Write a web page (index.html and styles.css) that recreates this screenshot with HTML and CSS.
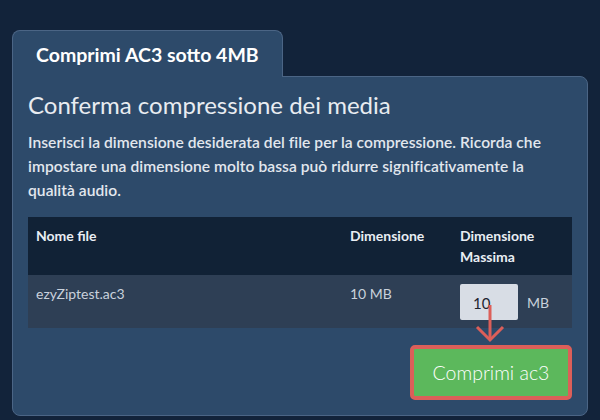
FILE: index.html
```html
<!DOCTYPE html>
<html lang="it">
<head>
<meta charset="utf-8">
<title>Comprimi AC3</title>
<link rel="stylesheet" href="styles.css">
</head>
<body>
<div class="wrap">
  <div class="tab">Comprimi AC3 sotto 4MB</div>
  <div class="panel">
    <h2 class="title">Conferma compressione dei media</h2>
    <p class="desc">Inserisci la dimensione desiderata del file per la compressione. Ricorda che impostare una dimensione molto bassa può ridurre significativamente la qualità audio.</p>
    <table class="files">
      <thead>
        <tr>
          <th class="c-name">Nome file</th>
          <th class="c-size">Dimensione</th>
          <th class="c-max">Dimensione Massima</th>
        </tr>
      </thead>
      <tbody>
        <tr>
          <td class="c-name">ezyZiptest.ac3</td>
          <td class="c-size">10 MB</td>
          <td class="c-max">
            <div class="maxwrap">
              <div class="input">10</div>
              <span class="unit">MB</span>
              <svg class="arrow" width="30" height="38" viewBox="0 0 30 38">
                <line x1="15" y1="0" x2="15" y2="35" stroke="#dc5f59" stroke-width="3"/>
                <polyline points="2,22 15,35 28,22" fill="none" stroke="#dc5f59" stroke-width="3"/>
              </svg>
            </div>
          </td>
        </tr>
      </tbody>
    </table>
    <div class="actions">
      <button class="btn">Comprimi ac3</button>
    </div>
  </div>
</div>
</body>
</html>
```

FILE: styles.css
```css
html, body {
  margin: 0;
  padding: 0;
  background: #12233a;
}
body {
  font-family: Lato, "Open Sans", sans-serif;
  color: #e6ebf1;
}
.wrap {
  padding: 30px 12px 0 12px;
}
.tab {
  position: relative;
  z-index: 1;
  width: 246px;
  height: 46px;
  padding-left: 23px;
  box-sizing: content-box;
  background: #2d4a6a;
  border: 1px solid #4b6585;
  border-bottom: none;
  border-radius: 8px 8px 0 0;
  margin-bottom: -1px;
  font-size: 19.5px;
  font-weight: 700;
  line-height: 48px;
  color: #ffffff;
}
.panel {
  background: #2d4a6a;
  border: 1px solid #4b6585;
  border-radius: 0 8px 8px 8px;
  padding: 13px 15px 15px 15px;
}
.title {
  margin: 0;
  font-size: 24px;
  font-weight: 400;
  line-height: 29px;
  color: #e8ecf1;
}
.desc {
  margin: 11px 0 0 0;
  font-size: 15.6px;
  font-weight: 600;
  letter-spacing: 0.05px;
  line-height: 24px;
  color: #e2e7ee;
}
.files {
  margin-top: 15px;
  width: 100%;
  border-collapse: collapse;
  font-size: 14px;
}
.files th {
  background: #112236;
  color: #e9eef4;
  font-weight: 700;
  text-align: left;
  vertical-align: top;
  line-height: 21px;
  padding: 8px 8px 8px 8px;
}
.files td {
  background: #2e3f55;
  color: #c9d1dc;
  vertical-align: top;
  line-height: 21px;
  padding: 8px 8px 8px 8px;
}
.c-name { width: 298px; }
.c-size { width: 94px; }
.c-max { width: 104px; }
.maxwrap {
  position: relative;
  display: flex;
  align-items: center;
  margin-top: 1px;
}
.input {
  width: 45px;
  height: 36px;
  padding-left: 13px;
  background: #d8dde5;
  border-radius: 2px;
  color: #1d2430;
  font-size: 15px;
  line-height: 38px;
}
.unit {
  margin-left: 9px;
  color: #c9d1dc;
  font-size: 14px;
}
.arrow {
  position: absolute;
  left: 15px;
  top: 21px;
}
.actions {
  display: flex;
  justify-content: flex-end;
  margin-top: 17px;
}
.btn {
  width: 162px;
  height: 55px;
  background: #5cb85c;
  border: 4px solid #dc5f59;
  border-radius: 5px;
  color: #ffffff;
  font-family: Lato, "Open Sans", sans-serif;
  font-size: 19.5px;
  font-weight: 300;
  padding: 0;
}
```
